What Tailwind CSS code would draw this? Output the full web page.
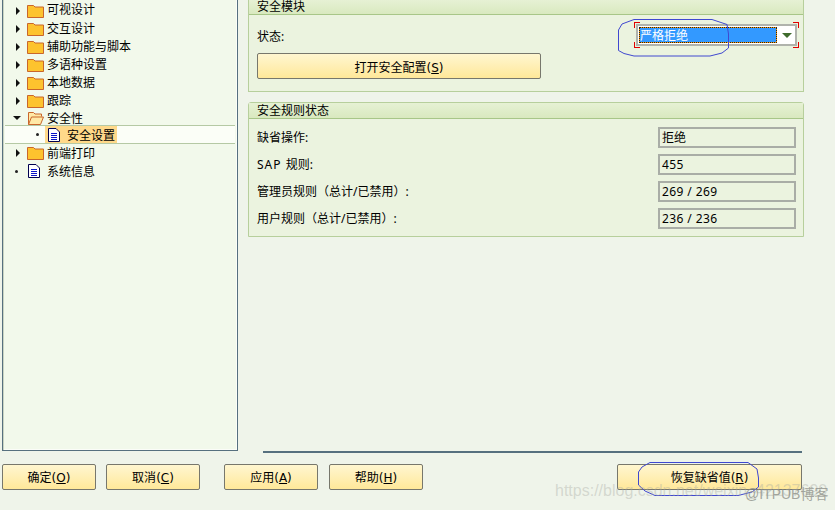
<!DOCTYPE html>
<html lang="zh-CN">
<head>
    <meta charset="UTF-8">
    <title>安全设置</title>
    <script src="https://cdn.jsdelivr.net/npm/@tailwindcss/browser@4"></script>
</head>
<body class="bg-[#eff4ea] text-black">
<div class="relative w-[835px] h-[510px] overflow-hidden text-[12px] leading-none font-['Noto_Sans','Noto_Sans_CJK_SC',sans-serif]">

    <div class="flex h-[451px]">
        <!-- tree -->
        <div class="ml-[2px] w-[236px] h-[451px] border-x border-b border-[#56707f] bg-[#f2f9eb] pt-[1px] shadow-[inset_1px_0_0_#c9d4c2,inset_-1px_-1px_0_#fbfdf8]">
            <div class="flex items-center h-[19px]">
                <svg class="ml-[12px] w-[6px] h-[8px]" viewBox="0 0 6 8"><path d="M1 0l4 4-4 4z" fill="#111"/></svg>
                <svg class="ml-[6px] w-[17px] h-[14px]" viewBox="0 0 17 14"><path d="M.5 13.500V1.500h6l1.500 1.500h8.500v10.500z" fill="#fdc32e" stroke="#c9662b"/></svg>
                <span class="ml-[3px] pb-[2px]">可视设计</span>
            </div>
            <div class="flex items-center h-[18px]">
                <svg class="ml-[12px] w-[6px] h-[8px]" viewBox="0 0 6 8"><path d="M1 0l4 4-4 4z" fill="#111"/></svg>
                <svg class="ml-[6px] w-[17px] h-[14px]" viewBox="0 0 17 14"><path d="M.5 13.500V1.500h6l1.500 1.500h8.500v10.500z" fill="#fdc32e" stroke="#c9662b"/></svg>
                <span class="ml-[3px]">交互设计</span>
            </div>
            <div class="flex items-center h-[18px]">
                <svg class="ml-[12px] w-[6px] h-[8px]" viewBox="0 0 6 8"><path d="M1 0l4 4-4 4z" fill="#111"/></svg>
                <svg class="ml-[6px] w-[17px] h-[14px]" viewBox="0 0 17 14"><path d="M.5 13.500V1.500h6l1.500 1.500h8.500v10.500z" fill="#fdc32e" stroke="#c9662b"/></svg>
                <span class="ml-[3px]">辅助功能与脚本</span>
            </div>
            <div class="flex items-center h-[18px]">
                <svg class="ml-[12px] w-[6px] h-[8px]" viewBox="0 0 6 8"><path d="M1 0l4 4-4 4z" fill="#111"/></svg>
                <svg class="ml-[6px] w-[17px] h-[14px]" viewBox="0 0 17 14"><path d="M.5 13.500V1.500h6l1.500 1.500h8.500v10.500z" fill="#fdc32e" stroke="#c9662b"/></svg>
                <span class="ml-[3px]">多语种设置</span>
            </div>
            <div class="flex items-center h-[18px]">
                <svg class="ml-[12px] w-[6px] h-[8px]" viewBox="0 0 6 8"><path d="M1 0l4 4-4 4z" fill="#111"/></svg>
                <svg class="ml-[6px] w-[17px] h-[14px]" viewBox="0 0 17 14"><path d="M.5 13.500V1.500h6l1.500 1.500h8.500v10.500z" fill="#fdc32e" stroke="#c9662b"/></svg>
                <span class="ml-[3px]">本地数据</span>
            </div>
            <div class="flex items-center h-[18px]">
                <svg class="ml-[12px] w-[6px] h-[8px]" viewBox="0 0 6 8"><path d="M1 0l4 4-4 4z" fill="#111"/></svg>
                <svg class="ml-[6px] w-[17px] h-[14px]" viewBox="0 0 17 14"><path d="M.5 13.500V1.500h6l1.500 1.500h8.500v10.500z" fill="#fdc32e" stroke="#c9662b"/></svg>
                <span class="ml-[3px]">跟踪</span>
            </div>
            <div class="flex items-center h-[15px]">
                <svg class="ml-[10px] w-[8px] h-[6px]" viewBox="0 0 8 6"><path d="M0 1h8l-4 4z" fill="#111"/></svg>
                <svg class="ml-[6px] w-[17px] h-[14px]" viewBox="0 0 17 14"><path d="M1.500 13.500V1.500h5l1.500 1.500h6.500v2.500M1.500 13.500l3-7.500h12l-3 7.500z" fill="#ffe9a6" stroke="#c9662b"/></svg>
                <span class="ml-[3px] pt-[2px]">安全性</span>
            </div>
            <!-- selected row -->
            <div class="flex items-center h-[19px] mx-[2px] border-y border-[#b5c9a4] bg-[#fbfef7]">
                <span class="ml-[31px] w-[3px] h-[3px] rounded-full bg-[#222]"></span>
                <div class="flex items-center ml-[6px] w-[72px] h-[17px] bg-[#ffd98a]">
                    <svg class="ml-[3px] w-[12px] h-[14px]" viewBox="0 0 12 14"><path d="M.5.500h7.500l3.500 3.500v9.500h-11z" fill="#fff" stroke="#000050"/><path d="M3 5.500h6M3 7.500h6M3 9.500h6M3 11.500h6" stroke="#0a14c8"/></svg>
                    <span class="ml-[7px] pt-[2px]">安全设置</span>
                </div>
            </div>
            <div class="flex items-center h-[18px]">
                <svg class="ml-[12px] w-[6px] h-[8px]" viewBox="0 0 6 8"><path d="M1 0l4 4-4 4z" fill="#111"/></svg>
                <svg class="ml-[6px] w-[17px] h-[14px]" viewBox="0 0 17 14"><path d="M.5 13.500V1.500h6l1.500 1.500h8.500v10.500z" fill="#fdc32e" stroke="#c9662b"/></svg>
                <span class="ml-[3px] pt-[2px]">前端打印</span>
            </div>
            <div class="flex items-center h-[18px]">
                <span class="ml-[12px] w-[3px] h-[3px] rounded-full bg-[#222]"></span>
                <svg class="ml-[10px] w-[12px] h-[14px]" viewBox="0 0 12 14"><path d="M.5.500h7.500l3.500 3.500v9.500h-11z" fill="#fff" stroke="#000050"/><path d="M3 5.500h6M3 7.500h6M3 9.500h6M3 11.500h6" stroke="#0a14c8"/></svg>
                <span class="ml-[7px] pt-[2px]">系统信息</span>
            </div>
        </div>

        <!-- right column -->
        <div class="ml-[10px] w-[556px]">
            <section class="h-[92px] border-x border-b border-[#b7cf9c] bg-[#ebf3df]">
                <div class="h-[15px] pl-[8px] pt-[1px] border-b border-[#a8c688] bg-gradient-to-b from-[#e6f1d4] to-[#d9e9bf]">安全模块</div>
                <div class="flex items-center mt-[9px] pl-[8px] pr-[6px] h-[22px]">
                    <span class="pt-[3px]">状态:</span>
                    <div class="relative ml-auto flex items-center w-[161px] h-[22px] border-2 border-[#b0b3ac] bg-white pl-[1px]">
                        <span class="flex items-center w-[138px] h-[16px] pt-[1px] border border-[#f90] bg-[#3399ff] text-white outline-1 outline-dotted outline-[#222] -outline-offset-1">严格拒绝</span>
                        <svg class="ml-[5px] w-[10px] h-[5px]" viewBox="0 0 10 5"><path d="M0 0h10l-5 5z" fill="#3f6b2c"/></svg>
                        <span class="absolute -left-[4px] -top-[4px] w-[6px] h-[6px] border-l border-t border-[#e00000]"></span>
                        <span class="absolute -right-[4px] -top-[4px] w-[6px] h-[6px] border-r border-t border-[#e00000]"></span>
                        <span class="absolute -left-[4px] -bottom-[4px] w-[6px] h-[6px] border-l border-b border-[#e00000]"></span>
                        <span class="absolute -right-[4px] -bottom-[4px] w-[6px] h-[6px] border-r border-b border-[#e00000]"></span>
                    </div>
                </div>
                <button class="flex items-center justify-center mt-[7px] ml-[8px] pt-[3px] w-[284px] h-[26px] rounded-[2px] border border-[#77776c] bg-gradient-to-b from-[#fff6d0] to-[#ffe899]">打开安全配置<span class="font-['DejaVu_Sans',sans-serif]">(<span class="underline">S</span>)</span></button>
            </section>

            <section class="mt-[10px] h-[135px] rounded-t-[3px] border border-[#b7cf9c] bg-[#ebf3df]">
                <div class="h-[16px] pl-[8px] pt-[2px] border-b border-[#a8c688] bg-gradient-to-b from-[#e6f1d4] to-[#d9e9bf]">安全规则状态</div>
                <div class="flex flex-col gap-[6px] mt-[8px] pl-[8px] pr-[7px]">
                    <div class="flex items-center justify-between h-[21px]">
                        <span>缺省操作:</span>
                        <span class="flex items-center w-[138px] h-[21px] pl-[2px] border-2 border-[#a9ada6]">拒绝</span>
                    </div>
                    <div class="flex items-center justify-between h-[21px]">
                        <span><span class="tracking-[1px]">SAP </span>规则:</span>
                        <span class="flex items-center w-[138px] h-[21px] pl-[2px] border-2 border-[#a9ada6] tracking-[0.4px]">455</span>
                    </div>
                    <div class="flex items-center justify-between h-[21px]">
                        <span class="pt-[1px]">管理员规则（总计/已禁用）:</span>
                        <span class="flex items-center w-[138px] h-[21px] pl-[2px] border-2 border-[#a9ada6] tracking-[0.4px]">269 / 269</span>
                    </div>
                    <div class="flex items-center justify-between h-[21px]">
                        <span class="pt-[1px]">用户规则（总计/已禁用）:</span>
                        <span class="flex items-center w-[138px] h-[21px] pl-[2px] border-2 border-[#a9ada6] tracking-[0.4px]">236 / 236</span>
                    </div>
                </div>
            </section>
        </div>
    </div>

    <div class="ml-[263px] w-[539px] h-[2px] bg-[#56707f]"></div>

    <!-- footer buttons -->
    <div class="flex mt-[11px] pl-[2px]">
        <button class="flex items-center justify-center pt-[1px] w-[94px] h-[26px] rounded-[2px] border border-[#77776c] bg-gradient-to-b from-[#fff6d0] to-[#ffe899]">确定<span class="font-['DejaVu_Sans',sans-serif]">(<span class="underline">O</span>)</span></button>
        <button class="flex items-center justify-center pt-[1px] ml-[10px] w-[94px] h-[26px] rounded-[2px] border border-[#77776c] bg-gradient-to-b from-[#fff6d0] to-[#ffe899]">取消<span class="font-['DejaVu_Sans',sans-serif]">(<span class="underline">C</span>)</span></button>
        <button class="flex items-center justify-center pt-[1px] ml-[24px] w-[94px] h-[26px] rounded-[2px] border border-[#77776c] bg-gradient-to-b from-[#fff6d0] to-[#ffe899]">应用<span class="font-['DejaVu_Sans',sans-serif]">(<span class="underline">A</span>)</span></button>
        <button class="flex items-center justify-center pt-[1px] ml-[11px] w-[94px] h-[26px] rounded-[2px] border border-[#77776c] bg-gradient-to-b from-[#fff6d0] to-[#ffe899]">帮助<span class="font-['DejaVu_Sans',sans-serif]">(<span class="underline">H</span>)</span></button>
        <button class="flex items-center justify-center pt-[1px] ml-[194px] w-[185px] h-[26px] rounded-[2px] border border-[#77776c] bg-gradient-to-b from-[#fff6d0] to-[#ffe899]">恢复缺省值<span class="font-['DejaVu_Sans',sans-serif]">(<span class="underline">R</span>)</span></button>
    </div>

    <!-- hand drawn marks on top of the screenshot -->
    <svg class="absolute left-0 top-0 w-[835px] h-[510px] pointer-events-none" viewBox="0 0 835 510" fill="none" stroke="#4048d0">
        <path d="M634 19.500H712L727 24.500L728.500 34V48L722 53L710 56H634L624 53.500L618.500 50.500V30L622 24z"/>
        <path d="M650 462.500H748L757 469L758.500 478V487L752 492L738 495.500H655L645 491L638.500 485V472L642 467z"/>
    </svg>

    <!-- watermark -->
    <span class="absolute left-[555px] top-[483px] text-[16px] whitespace-nowrap text-[#a9aba3]/40 font-['Liberation_Sans',sans-serif]">https://blog.csdn.net/weixin_42137690</span>
    <span class="absolute left-[745px] top-[487px] text-[14px] whitespace-nowrap text-[#8e9089]/80 font-['Liberation_Sans','Noto_Sans_CJK_SC',sans-serif]">@ITPUB博客</span>
</div>
</body>
</html>
